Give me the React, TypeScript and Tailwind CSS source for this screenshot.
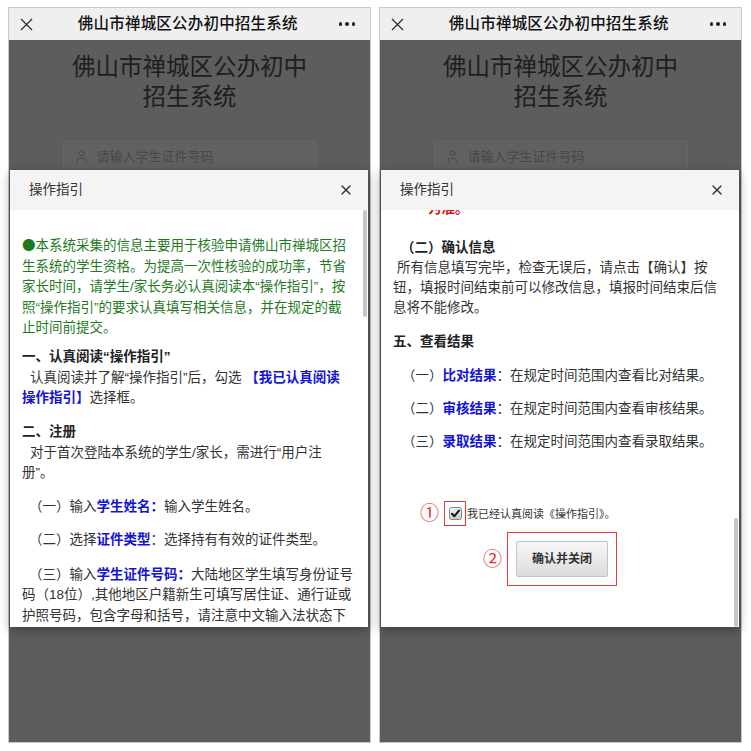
import type { ReactNode } from "react";
import { X, User } from "lucide-react";

const font = "font-['Liberation_Sans','Noto_Sans_CJK_SC',sans-serif]";

const Blue = ({ children }: { children: ReactNode }) => (
  <span className="font-bold text-[#1414d4]">{children}</span>
);

function Phone({ children, thumb }: { children: ReactNode; thumb: string }) {
  return (
    <div className="flex h-[734px] w-[361px] flex-col ring-1 ring-[#c9c9c9]">
      {/* WeChat top bar */}
      <header className="flex h-[32px] items-center justify-between bg-[#efefef] px-[7px]">
        <X className="h-[21px] w-[21px] text-[#222]" strokeWidth={1.3} />
        <h1 className="text-[15.5px] font-medium tracking-[0.2px] text-[#111]">佛山市禅城区公办初中招生系统</h1>
        <div className="flex gap-[3px] pr-[8px]">
          <span className="h-[3.5px] w-[3.5px] rounded-full bg-[#222]" />
          <span className="h-[3.5px] w-[3.5px] rounded-full bg-[#222]" />
          <span className="h-[3.5px] w-[3.5px] rounded-full bg-[#222]" />
        </div>
      </header>

      {/* page under the overlay */}
      <main className="relative flex flex-1 flex-col items-center bg-[#5d5d5d]">
        <div className="pt-[12px] text-center text-[23.5px] font-normal leading-[30px] text-[#1e1e1e]">
          佛山市禅城区公办初中
          <br />
          招生系统
        </div>
        <div className="mt-[29px] flex h-[31px] w-[254px] items-center gap-[8px] border border-[#666] bg-[#616161] px-[10px] text-[13px] text-[#474747]">
          <User className="h-[15px] w-[15px]" strokeWidth={1.5} />
          请输入学生证件号码
        </div>

        {/* dialog */}
        <section className="absolute left-[1px] right-[2px] top-[130px] flex h-[457px] flex-col bg-white shadow-[0_3px_10px_rgba(0,0,0,0.35)]">
          <div className="flex h-[40px] shrink-0 items-center justify-between bg-[#f4f4f4] pl-[19px] pr-[14px]">
            <span className="text-[13.5px] text-[#333]">操作指引</span>
            <X className="h-[16px] w-[16px] text-[#333]" strokeWidth={2} />
          </div>
          <div className="relative flex-1 overflow-hidden px-[12px] text-[13.5px] text-[#333]">
            {children}
            <div className={`absolute right-[1px] w-[4px] rounded-[2px] bg-[#c6c6c6] ${thumb}`} />
          </div>
        </section>
      </main>
    </div>
  );
}

function LeftContent() {
  return (
    <div className="whitespace-nowrap pt-[24px] leading-[20.5px]">
      <p className="text-[#1f7a1f]">
        <span className="font-['Noto_Sans_CJK_SC',sans-serif]">●</span>本系统采集的信息主要用于核验申请佛山市禅城区招
        <br />
        生系统的学生资格。为提高一次性核验的成功率，节省
        <br />
        家长时间，请学生/家长务必认真阅读本“操作指引”，按
        <br />
        照“操作指引”的要求认真填写相关信息，并在规定的截
        <br />
        止时间前提交。
      </p>
      <p className="mt-[8.5px] font-bold text-[#222]">一、认真阅读“操作指引”</p>
      <p className="indent-[8px]">
        认真阅读并了解“操作指引”后，勾选 <Blue>【我已认真阅读</Blue>
        <br />
        <Blue>操作指引】</Blue>选择框。
      </p>
      <p className="mt-[13.5px] font-bold text-[#222]">二、注册</p>
      <p className="indent-[8px]">
        对于首次登陆本系统的学生/家长，需进行“用户注
        <br />
        册”。
      </p>
      <p className="mt-[13.5px] pl-[7px]">
        （一）输入<Blue>学生姓名：</Blue>输入学生姓名。
      </p>
      <p className="mt-[12px] pl-[7px]">
        （二）选择<Blue>证件类型</Blue>：选择持有有效的证件类型。
      </p>
      <p className="mt-[14.5px] indent-[7px]">
        （三）输入<Blue>学生证件号码：</Blue>大陆地区学生填写身份证号
        <br />
        码（18位）,其他地区户籍新生可填写居住证、通行证或
        <br />
        护照号码，包含字母和括号，请注意中文输入法状态下
        <br />
        需设置为半角输入，字母使用大写。
      </p>
    </div>
  );
}

function RightContent() {
  return (
    <div className="whitespace-nowrap leading-[20px]">
      <p className="-mt-[11px] pl-[35px] font-bold text-[#d41414]">为准。</p>
      <p className="mt-[19px] pl-[8px] font-bold text-[#222]">（二）确认信息</p>
      <p className="indent-[4px]">
        所有信息填写完毕，检查无误后，请点击【确认】按
        <br />
        钮，填报时间结束前可以修改信息，填报时间结束后信
        <br />
        息将不能修改。
      </p>
      <p className="mt-[14px] font-bold text-[#222]">五、查看结果</p>
      <p className="mt-[14px] pl-[9px]">
        （一）<Blue>比对结果</Blue>：在规定时间范围内查看比对结果。
      </p>
      <p className="mt-[13px] pl-[9px]">
        （二）<Blue>审核结果</Blue>：在规定时间范围内查看审核结果。
      </p>
      <p className="mt-[13px] pl-[9px]">
        （三）<Blue>录取结果</Blue>：在规定时间范围内查看录取结果。
      </p>

      {/* step 1: agree checkbox */}
      <div className="ml-[27px] mt-[49px] flex items-center">
        <span className="text-[19px] leading-[25px] text-[#e32b2b]">①</span>
        <span className="ml-[5px] flex h-[25px] w-[22px] items-center justify-center border border-[#e83a3a]">
          <svg width="13" height="13" viewBox="0 0 13 13">
            <defs>
              <linearGradient id="cb" x1="0" y1="0" x2="0" y2="1">
                <stop offset="0" stopColor="#f4f4f4" />
                <stop offset="1" stopColor="#c8c8c8" />
              </linearGradient>
            </defs>
            <rect x="0.5" y="0.5" width="12" height="12" rx="2" fill="url(#cb)" stroke="#8a8a8a" />
            <path d="M3 6.8 L5.4 9.2 L10 3.6" fill="none" stroke="#111" strokeWidth="2" strokeLinecap="round" strokeLinejoin="round" />
          </svg>
        </span>
        <span className="ml-[1px] text-[11px] text-[#333]">我已经认真阅读《操作指引》。</span>
      </div>

      {/* step 2: confirm button */}
      <div className="ml-[90px] mt-[6px] flex items-center">
        <span className="text-[19px] leading-[25px] text-[#e32b2b]">②</span>
        <span className="ml-[5px] border border-[#e83a3a] p-[8px]">
          <button className="h-[36px] w-[92px] rounded-[2px] border border-[#c4c4c4] bg-gradient-to-b from-[#f7f7f7] to-[#dcdcdc] text-[12px] font-bold text-[#333]">
            确认并关闭
          </button>
        </span>
      </div>
    </div>
  );
}

export default function App() {
  return (
    <div className={`flex h-[751px] w-[751px] gap-[10px] bg-white px-[9px] pt-[8px] ${font}`}>
      <Phone thumb="top-0 h-[107px]">
        <LeftContent />
      </Phone>
      <Phone thumb="top-[308px] h-[109px]">
        <RightContent />
      </Phone>
    </div>
  );
}
